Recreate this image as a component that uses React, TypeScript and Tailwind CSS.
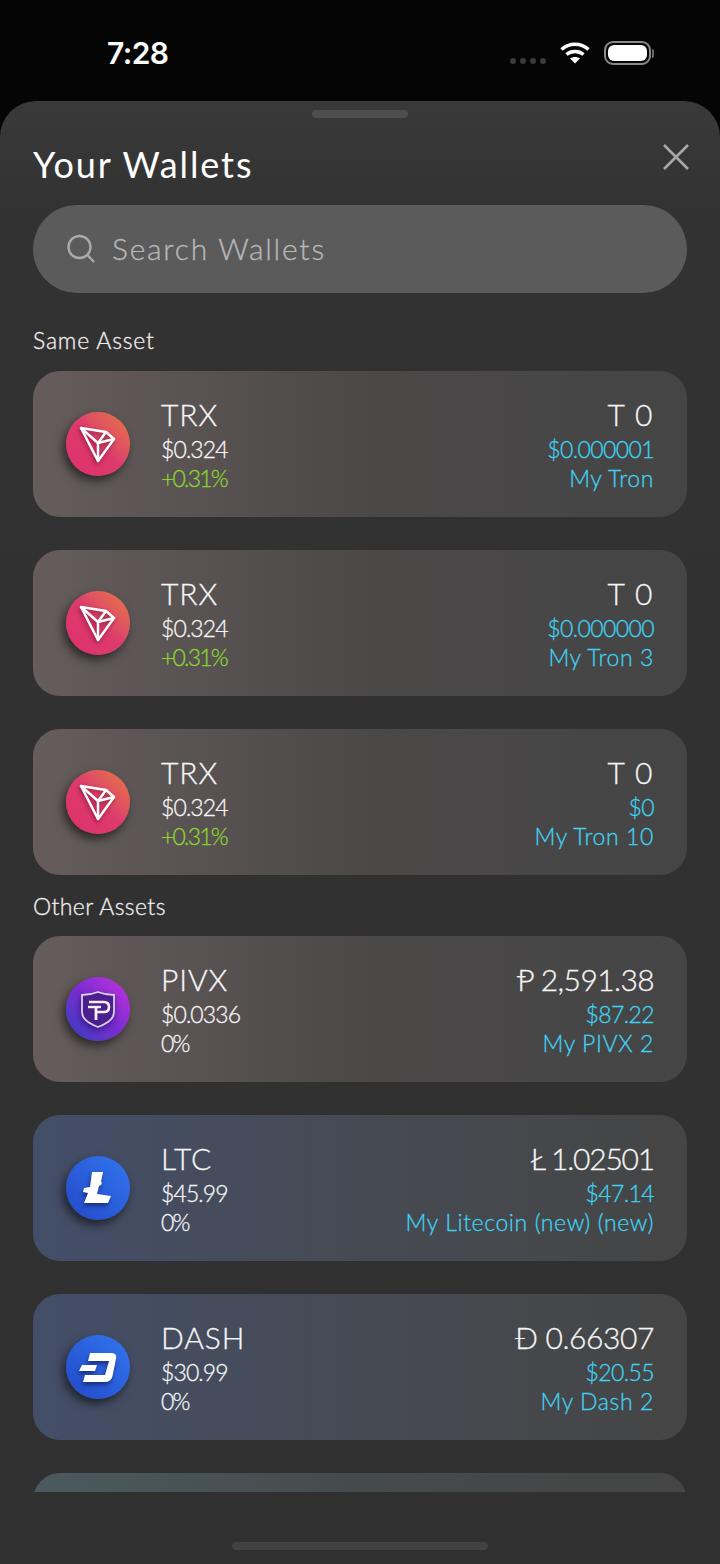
import React from "react";

function Tron() {
  return (
    <svg viewBox="0 0 64 64" className="w-16 h-16" fill="none" style={{ filter: "drop-shadow(-1px 2px 2px rgba(90,10,40,.6))" }}>
      <g stroke="#fff" strokeWidth="2.5" strokeLinejoin="round" strokeLinecap="round">
        <path d="M15 16 L40 20 L48 27 L32 49 Z" />
        <path d="M15 16 L32 31 L32 49" />
        <path d="M32 31 L48 27" />
        <path d="M32 31 L40 20" />
      </g>
    </svg>
  );
}
function Pivx() {
  return (
    <svg viewBox="0 0 64 64" className="w-16 h-16" fill="none" style={{ filter: "drop-shadow(-1px 3px 3px rgba(30,10,90,.6))" }}>
      <path d="M32 15 C37 17 43 18 48 18 L48 35 C48 42 40 47 32 50 C24 47 16 42 16 35 L16 18 C21 18 27 17 32 15 Z" fill="#4c1f8e" stroke="#d9cfe8" strokeWidth="1.8" />
      <path d="M23 25 H38 C42 25 43 27 43 30 C43 33 42 35 38 35 H30" stroke="#f3eef8" strokeWidth="2.6" />
      <path d="M22 30 H35" stroke="#f3eef8" strokeWidth="2.4" />
      <path d="M30 30 V43" stroke="#f3eef8" strokeWidth="2.8" />
    </svg>
  );
}
function Ltc() {
  return (
    <svg viewBox="0 0 64 64" className="w-16 h-16">
      <path d="M26 16 H37 L35 26 L36 26 L35 29 L33 30 L31 38 L45 40 L42 47 H18 L22 37 L17 36 L18 32 L24 31 Z" fill="#fff" style={{ filter: "drop-shadow(-1px 3px 2px rgba(15,30,90,.7))" }} />
    </svg>
  );
}
function Dash() {
  return (
    <svg viewBox="0 0 64 64" className="w-16 h-16">
      <g fill="#fff" style={{ filter: "drop-shadow(-1px 3px 2px rgba(15,30,90,.7))" }}>
        <path d="M24 18 H45 C49 18 51 20 50 24 L46.5 41 C45.5 45 43 47 39 47 H17 L19 40 H39 L43 26 H22 Z" />
        <path d="M16 30 H31 L29 36 H13 Z" />
      </g>
    </svg>
  );
}

type W = { icon: React.ReactNode; bg: string; card: string; sym: string; price: string; chg: string; green?: boolean; amt: string; amtT: string; usd: string; name: string };

const trx = "bg-gradient-to-tr from-[#e0306f] via-[#dc3a6c] to-[#e8793a]";
const redCard = "bg-gradient-to-r from-[#665c5c] via-[#4b4848] via-[52%] to-[#454545]";
const pivxBg = "bg-gradient-to-tr from-[#2a3bc0] via-[#7a2bd0] to-[#c92fe0]";
const blueBg = "bg-gradient-to-tr from-[#2448c8] to-[#3276ee]";
const blueCard = "bg-gradient-to-r from-[#434e68] via-[#464a52] via-[52%] to-[#454545]";

const same: W[] = [
  { icon: <Tron />, bg: trx, card: redCard, sym: "TRX", price: "$0.324", chg: "+0.31%", green: true, amt: "T 0", amtT: "tracking-[1.5px]", usd: "$0.000001", name: "My Tron" },
  { icon: <Tron />, bg: trx, card: redCard, sym: "TRX", price: "$0.324", chg: "+0.31%", green: true, amt: "T 0", amtT: "tracking-[1.5px]", usd: "$0.000000", name: "My Tron 3" },
  { icon: <Tron />, bg: trx, card: redCard, sym: "TRX", price: "$0.324", chg: "+0.31%", green: true, amt: "T 0", amtT: "tracking-[1.5px]", usd: "$0", name: "My Tron 10" },
];
const other: W[] = [
  { icon: <Pivx />, bg: pivxBg, card: redCard, sym: "PIVX", price: "$0.0336", chg: "0%", amt: "Ᵽ 2,591.38", amtT: "tracking-[-0.6px]", usd: "$87.22", name: "My PIVX 2" },
  { icon: <Ltc />, bg: blueBg, card: blueCard, sym: "LTC", price: "$45.99", chg: "0%", amt: "Ł 1.02501", amtT: "tracking-[-1.2px]", usd: "$47.14", name: "My Litecoin (new) (new)" },
  { icon: <Dash />, bg: blueBg, card: blueCard, sym: "DASH", price: "$30.99", chg: "0%", amt: "Đ 0.66307", amtT: "tracking-[-0.4px]", usd: "$20.55", name: "My Dash 2" },
];

function Card({ w }: { w: W }) {
  return (
    <div className={`h-[146px] shrink-0 rounded-[27px] flex items-center pl-[33px] pr-[33px] [-webkit-text-stroke:0.3px] ${w.card}`}>
      <div className={`w-16 h-16 rounded-full shrink-0 shadow-[-3px_5px_10px_rgba(0,0,0,0.55)] ${w.bg}`}>{w.icon}</div>
      <div className="ml-[31px] flex flex-col pt-[1px]">
        <div className="text-[30px] leading-[34px] text-[#f5f5f5] tracking-[0.9px]">{w.sym}</div>
        <div className="mt-[4px] text-[23px] leading-[29px] text-[#f5f5f5] tracking-[-0.9px]">{w.price}</div>
        <div className={`text-[23px] leading-[29px] tracking-[-1.8px] ${w.green ? "text-[#8ad62e]" : "text-[#f5f5f5]"}`}>{w.chg}</div>
      </div>
      <div className="ml-auto flex flex-col items-end pt-[1px]">
        <div className={`text-[30px] leading-[34px] text-[#f5f5f5] ${w.amtT}`}>{w.amt}</div>
        <div className="mt-[4px] text-[23px] leading-[29px] text-[#3fd2f2] tracking-[-0.6px]">{w.usd}</div>
        <div className="text-[23px] leading-[29px] text-[#3fd2f2] tracking-[0.6px]">{w.name}</div>
      </div>
    </div>
  );
}

export default function App() {
  return (
    <div className="w-[720px] h-[1564px] bg-[#050505] flex flex-col overflow-hidden font-['Lato',sans-serif] font-light">
      <div className="h-[101px] shrink-0 flex items-start justify-between pl-[107px] pr-[66px] pt-[35px]">
        <div className="text-[30px] leading-9 font-semibold text-white font-['Inter',sans-serif] tracking-[-0.6px]">7:28</div>
        <div className="flex items-start gap-[13px] pt-[6px]">
          <div className="flex gap-[4px] mt-[17px]">
            <span className="w-[6px] h-[6px] rounded-full bg-[#3a3a3a]" />
            <span className="w-[6px] h-[6px] rounded-full bg-[#3a3a3a]" />
            <span className="w-[6px] h-[6px] rounded-full bg-[#3a3a3a]" />
            <span className="w-[6px] h-[6px] rounded-full bg-[#3a3a3a]" />
          </div>
          <svg viewBox="0 0 32 24" className="w-8 h-6" fill="none" stroke="#fff" strokeWidth="3.4">
            <path d="M2.5 8.5 C10 1.5 22 1.5 29.5 8.5" />
            <path d="M7.5 13.5 C12 9.5 20 9.5 24.5 13.5" />
            <path d="M16 22.5 L11 17.5 C14 15.5 18 15.5 21 17.5 Z" fill="#fff" stroke="none" />
          </svg>
          <div className="flex items-center">
            <div className="w-[47px] h-[24px] rounded-[9px] border-2 border-[#8a8a8a] p-[2px]">
              <div className="w-full h-full rounded-[6px] bg-white" />
            </div>
            <div className="w-[2px] h-[9px] rounded-r bg-[#6a6a6a] ml-[1px]" />
          </div>
        </div>
      </div>
      <div className="flex-1 rounded-t-[36px] bg-gradient-to-b from-[#393939] via-[#323232] via-[8%] to-[#303030] flex flex-col min-h-0">
        <div className="h-2 w-[96px] rounded-full bg-[#4d4d4d] mx-auto mt-[9px] shrink-0" />
        <div className="flex items-start justify-between pl-[33px] pr-[30px] mt-[24px] h-[63px] shrink-0">
          <div className="text-[36px] leading-[44px] text-white font-normal tracking-[1.9px]">Your Wallets</div>
          <svg viewBox="0 0 28 28" className="w-7 h-7 mt-[1px]" fill="none" stroke="#a8a8a8" strokeWidth="2.6">
            <path d="M2 2 L26 26 M26 2 L2 26" />
          </svg>
        </div>
        <div className="mx-[33px] h-[88px] shrink-0 rounded-full bg-[#5b5b5b] flex items-center pl-[33px]">
          <svg viewBox="0 0 30 30" className="w-[30px] h-[30px]" fill="none" stroke="#aaaaaa" strokeWidth="2.4">
            <circle cx="13.5" cy="13" r="11" />
            <path d="M21.5 21 L28 28" />
          </svg>
          <span className="ml-4 pb-[2px] text-[30px] text-[#b8b8b8] tracking-[1.75px] [-webkit-text-stroke:0.3px]">Search Wallets</span>
        </div>
        <div className="ml-[33px] mt-[33px] h-[28px] text-[23px] leading-[28px] text-[#f0f0f0] tracking-[0.8px] shrink-0 [-webkit-text-stroke:0.3px]">Same Asset</div>
        <div className="mt-[17px] h-[1121px] mx-[33px] shrink-0 overflow-hidden flex flex-col">
          {same.map((w, i) => (
            <div key={i} className={i ? "mt-[33px]" : ""}><Card w={w} /></div>
          ))}
          <div className="mt-[17px] mb-[16px] h-[28px] text-[23px] leading-[28px] text-[#f0f0f0] tracking-[0.4px] shrink-0 [-webkit-text-stroke:0.3px]">Other Assets</div>
          {other.map((w, i) => (
            <div key={i} className={i ? "mt-[33px]" : ""}><Card w={w} /></div>
          ))}
          <div className="mt-[33px] h-[146px] rounded-[27px] shrink-0 bg-gradient-to-r from-[#4a5a5f] via-[#454a4b] via-[52%] to-[#454545]" />
        </div>
        <div className="h-2 w-[256px] rounded-full bg-[#424242] mx-auto mt-[50px] shrink-0" />
      </div>
    </div>
  );
}
